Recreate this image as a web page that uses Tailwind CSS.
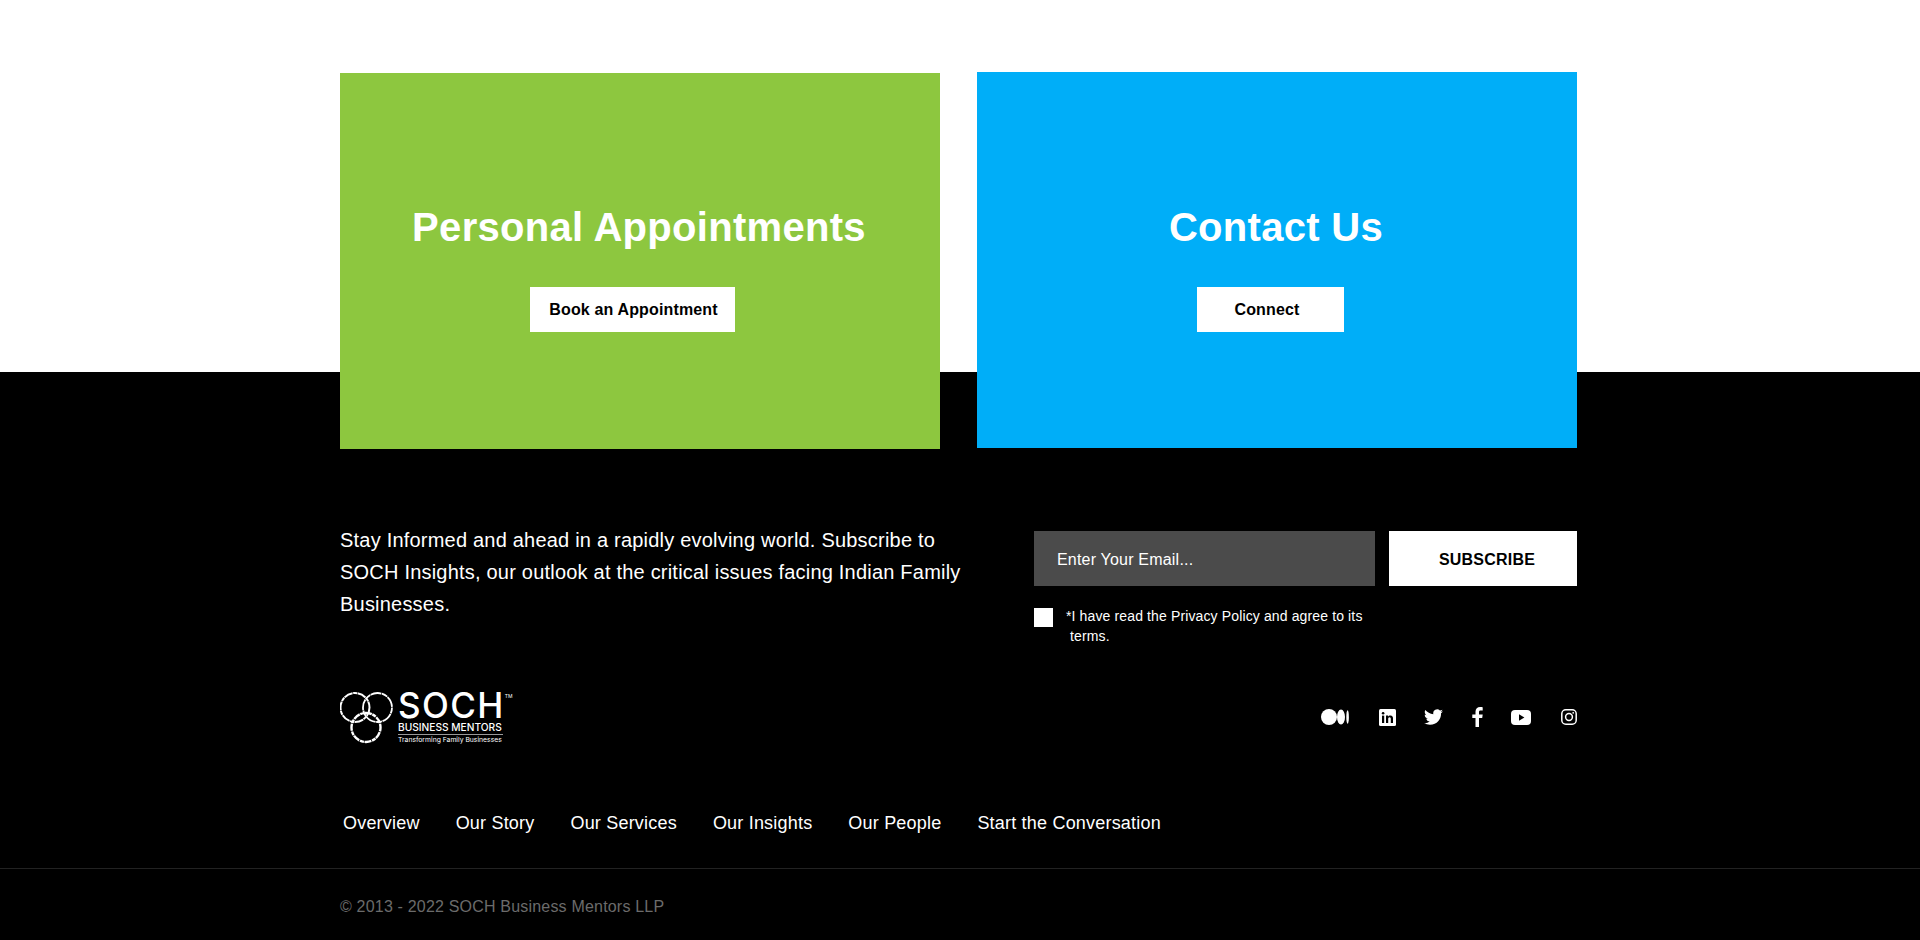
<!DOCTYPE html>
<html lang="en">
<head>
  <meta charset="UTF-8" />
  <meta name="viewport" content="width=device-width, initial-scale=1.0"/>
  <title>SOCH Business Mentors</title>
  <script src="https://cdn.jsdelivr.net/npm/@tailwindcss/browser@4"></script>
</head>
<body class="bg-black text-white font-['Liberation_Sans',Arial,sans-serif]">

  <!-- CARDS -->
  <section class="bg-white h-[372px] pt-[73px]">
    <div class="w-[1237px] ml-[340px] flex gap-[37px] items-start relative z-10">
      <div class="w-[600px] h-[376px] bg-[#8dc73f] flex flex-col items-center pt-[126px]">
        <h2 class="text-[40px] leading-[56px] font-bold tracking-[0.3px] -ml-[2px]">Personal Appointments</h2>
        <a href="#" class="mt-[32px] w-[205px] h-[45px] -ml-[15px] pl-[2px] bg-white text-black text-[16px] tracking-[0.15px] font-bold flex items-center justify-center">Book an Appointment</a>
      </div>
      <div class="w-[600px] h-[376px] -mt-px bg-[#00aef8] flex flex-col items-center pt-[127px]">
        <h2 class="text-[40px] leading-[56px] font-bold tracking-[0.3px] -ml-[2px]">Contact Us</h2>
        <a href="#" class="mt-[32px] w-[147px] h-[45px] -ml-[13px] pr-[7px] bg-white text-black text-[16px] tracking-[0.15px] font-bold flex items-center justify-center">Connect</a>
      </div>
    </div>
  </section>

  <!-- FOOTER -->
  <footer class="bg-black h-[568px]">
    <div class="w-[1237px] ml-[340px] pt-[159px]">
      <div class="flex justify-between h-[159px]">
        <p class="w-[640px] -mt-[7px] text-[20px] leading-[32px] tracking-[0.21px]">Stay Informed and ahead in a rapidly evolving world. Subscribe to SOCH Insights, our outlook at the critical issues facing Indian Family Businesses.</p>
        <form class="w-[543px]">
          <div class="flex gap-[14px]">
            <input type="text" placeholder="Enter Your Email..." class="w-[341px] h-[55px] bg-[#4b4b4b] px-[23px] pt-[3px] text-[16px] tracking-[0.2px] text-white placeholder:text-white outline-none">
            <button type="button" class="w-[188px] h-[55px] pl-[8px] pt-[3px] bg-white text-black text-[16px] font-bold tracking-[0.2px]">SUBSCRIBE</button>
          </div>
          <div class="flex mt-[20px]">
            <span class="w-[19px] h-[19px] mt-[2px] bg-white shrink-0"></span>
            <p class="ml-[13px] w-[320px] text-[14px] leading-[20px] tracking-[0.13px]">*I have read the Privacy Policy and agree to its<br><span class="ml-[4px]">terms.</span></p>
          </div>
        </form>
      </div>

      <!-- LOGO + SOCIAL -->
      <div class="flex justify-between items-center h-[56px] -mt-[1px]">
        <div class="flex items-start">
          <svg width="58" height="56" viewBox="0 0 58 56" fill="none" stroke="white" class="shrink-0">
            <circle cx="15" cy="18.500" r="14.500" stroke-width="2" stroke-dasharray="9 0.6 4 0.5"/>
            <circle cx="37.500" cy="18.500" r="14.500" stroke-width="1.800" stroke-dasharray="6 0.5 11 0.6"/>
            <circle cx="26" cy="38.500" r="14.500" stroke-width="2.400" stroke-dasharray="4 0.8 7 0.6"/>
          </svg>
          <div class="w-[115px] font-['Inter',sans-serif]">
            <div class="flex items-start h-[33px]">
              <span class="text-[35px] leading-[33px] tracking-[1.4px] font-medium">SOCH</span>
              <span class="text-[5px] leading-[8px] mt-[3px]">TM</span>
            </div>
            <div class="text-[10.200px] leading-[11px] font-medium border-b border-white/60 pb-[1px] w-[105px] whitespace-nowrap">BUSINESS MENTORS</div>
            <div class="text-[6.800px] leading-[10px] whitespace-nowrap">Transforming Family Businesses</div>
          </div>
        </div>
        <div class="flex items-center">
          <svg width="28" height="18" viewBox="0 0 28 18" fill="white"><circle cx="8" cy="9" r="8"/><ellipse cx="20" cy="9" rx="4" ry="7.600"/><ellipse cx="26.600" cy="9" rx="1.300" ry="6.800"/></svg>
          <svg class="ml-[30px]" width="17" height="17" viewBox="0 0 17 17"><rect width="17" height="17" rx="1.500" fill="white"/><rect x="3" y="6.600" width="2.200" height="7.400" fill="black"/><circle cx="4.100" cy="4.200" r="1.300" fill="black"/><path fill="black" d="M7 6.600h2.100v1c.4-.7 1.200-1.200 2.300-1.200 2 0 2.600 1.300 2.600 3.100V14h-2.200v-4c0-1-.3-1.700-1.200-1.700-1 0-1.400.7-1.400 1.700v4H7z"/></svg>
          <svg class="ml-[28px]" width="19" height="17" viewBox="0 0 24 21" fill="white"><path transform="translate(0 -2)" d="M23.953 4.57a10 10 0 01-2.825.775 4.958 4.958 0 002.163-2.723c-.951.555-2.005.959-3.127 1.184a4.92 4.92 0 00-8.384 4.482C7.69 8.095 4.067 6.13 1.64 3.162a4.822 4.822 0 00-.666 2.475c0 1.71.87 3.213 2.188 4.096a4.904 4.904 0 01-2.228-.616v.06a4.923 4.923 0 003.946 4.827 4.996 4.996 0 01-2.212.085 4.936 4.936 0 004.604 3.417 9.867 9.867 0 01-6.102 2.105c-.39 0-.779-.023-1.17-.067a13.995 13.995 0 007.557 2.209c9.053 0 13.998-7.496 13.998-13.985 0-.21 0-.42-.015-.63A9.935 9.935 0 0024 4.59z"/></svg>
          <svg class="ml-[29px]" width="11" height="20" viewBox="0 0 11 20" fill="white"><path d="M7 20v-9h3.200l.5-3.600H7V5.200c0-1 .3-1.700 1.800-1.700h1.900V.3C10.400.2 9.300.1 8.100.1 5.400.1 3.500 1.800 3.500 4.800v2.600H.3V11h3.200v9z"/></svg>
          <svg class="ml-[28px]" width="20" height="15" viewBox="0 0 20 15"><rect width="20" height="15" rx="4" fill="white"/><path d="M8 4.300v6.400l5.400-3.200z" fill="black"/></svg>
          <svg class="ml-[30px]" width="16" height="16" viewBox="0 0 16 16" fill="none" stroke="white" stroke-width="1.500"><rect x="0.800" y="0.800" width="14.400" height="14.400" rx="4"/><circle cx="8" cy="8" r="3.400"/><circle cx="12.200" cy="3.800" r="0.900" fill="white" stroke="none"/></svg>
        </div>
      </div>

      <!-- NAV -->
      <nav class="flex gap-[36px] mt-[66px] ml-[3px] text-[18px] leading-[24px] tracking-[0.2px]">
        <a href="#">Overview</a>
        <a href="#">Our Story</a>
        <a href="#">Our Services</a>
        <a href="#">Our Insights</a>
        <a href="#">Our People</a>
        <a href="#">Start the Conversation</a>
      </nav>
    </div>

    <div class="border-t border-[#222222] mt-[33px] pt-[26px]">
      <p class="ml-[340px] text-[16px] leading-[24px] tracking-[0.19px] text-[#6b6b6b]">© 2013 - 2022 SOCH Business Mentors LLP</p>
    </div>
  </footer>

</body>
</html>
